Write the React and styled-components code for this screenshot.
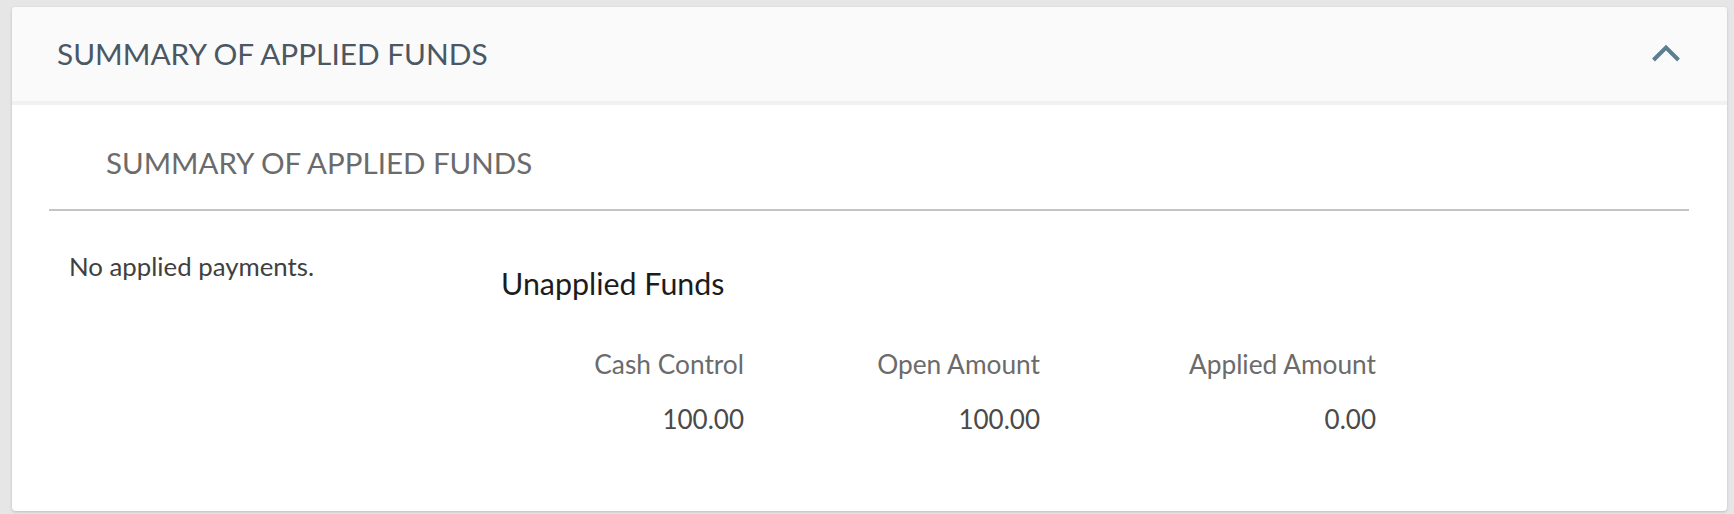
import React from 'react'
import styled, { createGlobalStyle } from 'styled-components'

const GlobalStyle = createGlobalStyle`
  html, body {
    margin: 0;
    padding: 0;
    background: #e6e6e6;
    font-family: Lato, "Open Sans", "Liberation Sans", sans-serif;
  }
`

const Page = styled.div`
  padding: 7px 7px 3px 12px;
`

const Card = styled.section`
  background: #fff;
  border-radius: 4px;
  box-shadow: 0 1px 3px rgba(0, 0, 0, 0.18);
  overflow: hidden;
  padding-bottom: 76px;
`

const Header = styled.div`
  height: 94px;
  background: #fafafa;
  border-bottom: 4px solid #f1f1f1;
  display: flex;
  align-items: center;
  justify-content: space-between;
  padding: 0 46px 0 45px;
`

const HeaderTitle = styled.h2`
  margin: 0;
  font-size: 29.8px;
  font-weight: 400;
  line-height: 94px;
  color: #4b5763;
`

const Toggle = styled.button`
  border: 0;
  background: none;
  padding: 0;
  width: 30px;
  height: 22px;
  display: flex;
  align-items: center;
  justify-content: center;
  color: #5b7e90;
  margin-top: -4px;
`

const SectionTitle = styled.h3`
  margin: 40px 0 0;
  padding: 0 0 28px 94px;
  font-size: 29.5px;
  font-weight: 400;
  line-height: 36px;
  color: #6b6b6b;
`

const Divider = styled.hr`
  margin: 0 38px 0 37px;
  border: 0;
  border-top: 2px solid #c4c4c4;
`

const Content = styled.div`
  display: flex;
`

const Empty = styled.p`
  margin: 39px 0 0;
  width: 432px;
  padding-left: 57px;
  font-size: 25.8px;
  line-height: 32px;
  color: #404040;
`

const Unapplied = styled.div`
  display: flex;
  flex-direction: column;
`

const SubTitle = styled.h4`
  margin: 55px 0 0;
  font-size: 30.4px;
  font-weight: 400;
  line-height: 34px;
  color: #1c1c1c;
`

const Table = styled.div`
  display: grid;
  grid-template-columns: 243px 296px 336px;
  margin-top: 48px;
  row-gap: 23px;
`

const Cell = styled.div`
  text-align: right;
  font-size: ${p => (p.$head ? '26.3px' : '26px')};
  line-height: 32px;
  color: ${p => (p.$head ? '#6b6b6b' : '#4a4a4a')};
`

const columns = [
  { label: 'Cash Control', value: '100.00' },
  { label: 'Open Amount', value: '100.00' },
  { label: 'Applied Amount', value: '0.00' },
]

const App = () => {
  return (
    <>
      <GlobalStyle />
      <Page>
        <Card>
          <Header>
            <HeaderTitle>SUMMARY OF APPLIED FUNDS</HeaderTitle>
            <Toggle aria-label="Collapse">
              <svg width="28" height="20" viewBox="0 0 28 20">
                <polyline
                  points="1.5,18 14,5.5 26.5,18"
                  fill="none"
                  stroke="currentColor"
                  strokeWidth="4"
                />
              </svg>
            </Toggle>
          </Header>
          <SectionTitle>SUMMARY OF APPLIED FUNDS</SectionTitle>
          <Divider />
          <Content>
            <Empty>No applied payments.</Empty>
            <Unapplied>
              <SubTitle>Unapplied Funds</SubTitle>
              <Table>
                {columns.map(c => (
                  <Cell key={c.label} $head>{c.label}</Cell>
                ))}
                {columns.map(c => (
                  <Cell key={c.label + '-v'}>{c.value}</Cell>
                ))}
              </Table>
            </Unapplied>
          </Content>
        </Card>
      </Page>
    </>
  )
}

export default App
